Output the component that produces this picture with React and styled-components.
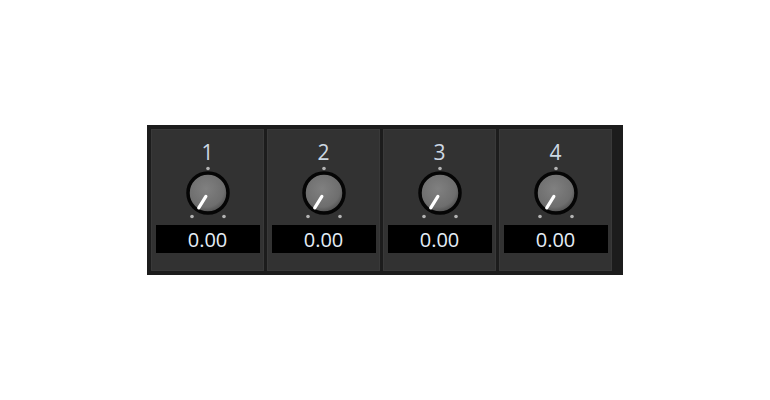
import React from 'react';
import styled, { createGlobalStyle } from 'styled-components';

const GlobalStyle = createGlobalStyle`
    html, body {
        margin: 0;
        padding: 0;
        background: #ffffff;
    }
    #root {
        width: 770px;
        height: 400px;
        display: flex;
        align-items: center;
        justify-content: center;
    }
`;

const Rack = styled.div`
    box-sizing: border-box;
    width: 476px;
    display: flex;
    gap: 3px;
    padding: 4px;
    background-color: #1c1c1c;
`;

const Channel = styled.div`
    width: 111px;
    height: 140px;
    flex-shrink: 0;
    display: flex;
    flex-direction: column;
    align-items: center;
    background-color: #323232;
    border: 1px solid #393939;
    font-family: "Open Sans", "Noto Sans", sans-serif;
`;

const Label = styled.div`
    margin-top: 10px;
    height: 24px;
    line-height: 24px;
    font-size: 21px;
    color: #cdd8e3;
`;

const KnobSvg = styled.svg`
    display: block;
    margin-top: 2px;
`;

const ValueBox = styled.div`
    margin-top: 5px;
    width: 104px;
    height: 28px;
    line-height: 29px;
    text-align: center;
    background-color: #000000;
    color: #e4edf6;
    font-size: 20px;
`;

const Knob = ({ id, value }) => {
    // pointer sits at the minimum end of the sweep (about 35° left of straight down)
    const angle = (-148 + value * 296) * Math.PI / 180;
    const dx = Math.sin(angle);
    const dy = -Math.cos(angle);
    const cx = 26;
    const cy = 27;

    return (
        <KnobSvg width="52" height="54" viewBox="0 0 52 54">
            <defs>
                <radialGradient id={`knob-${id}`} cx="0.45" cy="0.4" r="0.6">
                    <stop offset="0" stopColor="#808080" />
                    <stop offset="0.75" stopColor="#6e6e6e" />
                    <stop offset="1" stopColor="#4e4e4e" />
                </radialGradient>
            </defs>
            <circle cx={cx} cy="2.5" r="1.8" fill="#b4b4b4" />
            <circle cx={cx - 16} cy="50.5" r="1.8" fill="#b4b4b4" />
            <circle cx={cx + 16} cy="50.5" r="1.8" fill="#b4b4b4" />
            <circle cx={cx} cy={cy} r="20" fill={`url(#knob-${id})`} stroke="#050505" strokeWidth="3.5" />
            <line
                x1={cx + dx * 4}
                y1={cy + dy * 4}
                x2={cx + dx * 17.5}
                y2={cy + dy * 17.5}
                stroke="#ffffff"
                strokeWidth="3.2"
                strokeLinecap="round"
            />
        </KnobSvg>
    );
};

const channels = [
    { id: 1, value: 0 },
    { id: 2, value: 0 },
    { id: 3, value: 0 },
    { id: 4, value: 0 },
];

const App = () => (
    <>
        <GlobalStyle />
        <Rack>
            {channels.map(ch => (
                <Channel key={ch.id}>
                    <Label>{ch.id}</Label>
                    <Knob id={ch.id} value={ch.value} />
                    <ValueBox>{ch.value.toFixed(2)}</ValueBox>
                </Channel>
            ))}
        </Rack>
    </>
);

export default App;
